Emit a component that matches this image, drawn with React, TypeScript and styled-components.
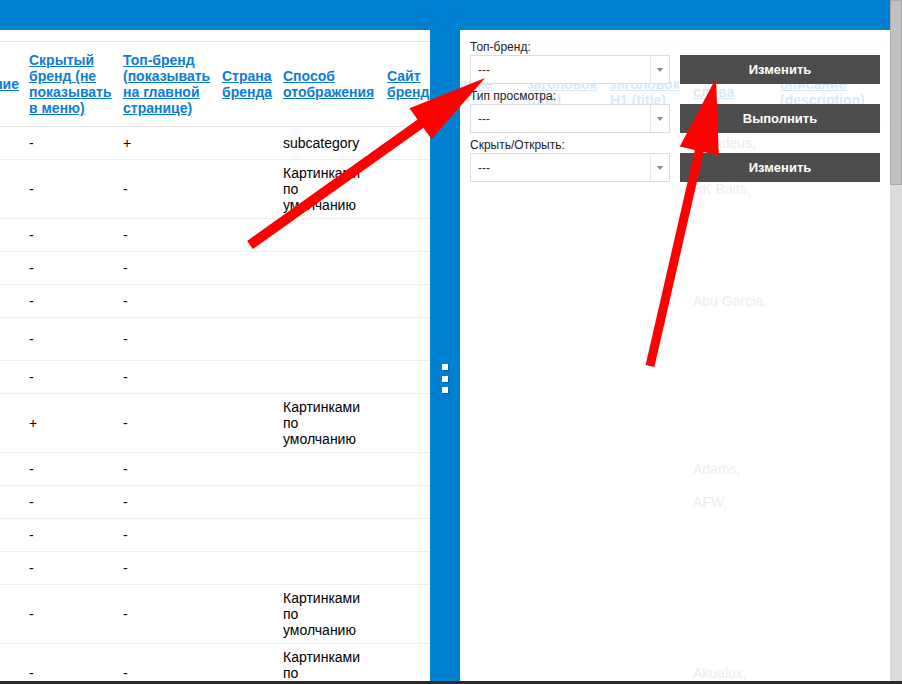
import React from 'react';
import styled, { createGlobalStyle } from 'styled-components';

const GlobalStyle = createGlobalStyle`
  html, body { margin: 0; padding: 0; background: #ffffff; }
  body { font-family: "Liberation Sans", Arial, sans-serif; }
  * { box-sizing: border-box; }
`;

const LEFT_COLS = '24px 94px 99px 61px 104px 120px';
const GHOST_COLS = '62px 83px 83px 87px 115px';

const Screen = styled.div`
  position: relative;
  width: 902px;
  height: 684px;
  overflow: hidden;
  display: flex;
  flex-direction: column;
`;

const Workspace = styled.div`
  display: flex;
  height: 681px;
`;

const Main = styled.div`
  width: 890px;
  background: #0080d0;
  padding-top: 30px;
  display: grid;
  grid-template-columns: 430px 30px 430px;
  grid-template-rows: minmax(0, 1fr);
`;

const LeftPanel = styled.div`
  background: #ffffff;
  overflow: hidden;
  padding-top: 11px;
`;

const Splitter = styled.div`
  display: flex;
  flex-direction: column;
  align-items: center;
  gap: 5.5px;
  padding-top: 334px;
`;

const Grip = styled.span`
  display: block;
  width: 6px;
  height: 6px;
  background: #ffffff;
  box-shadow: 1px 1px 0 rgba(0, 40, 90, 0.35);
`;

const RightPanel = styled.div`
  background: #ffffff;
  overflow: hidden;
  display: grid;
  grid-template-columns: 100%;
  grid-template-rows: 100%;
`;

const HeadRow = styled.div<{ $cols: string }>`
  display: grid;
  grid-template-columns: ${(p) => p.$cols};
  height: 86px;
  border-top: 1px solid #e4e4e4;
  border-bottom: 1px solid #e4e4e4;
`;

const HeadCell = styled.div<{ $end?: boolean; $flush?: boolean }>`
  display: flex;
  align-items: center;
  justify-content: ${(p) => (p.$end ? 'flex-end' : 'flex-start')};
  padding: ${(p) => (p.$flush ? '0' : '0 5px')};
  overflow: hidden;
  white-space: nowrap;
`;

const HeadLink = styled.a`
  color: #0c7ed4;
  font-weight: bold;
  font-size: 14px;
  line-height: 16px;
  text-decoration: underline;
  cursor: pointer;
`;

const BodyRow = styled.div<{ $cols: string; $min: number }>`
  display: grid;
  grid-template-columns: ${(p) => p.$cols};
  min-height: ${(p) => p.$min}px;
  border-bottom: 1px solid #eeeeee;
`;

const Cell = styled.div`
  display: flex;
  align-items: center;
  padding: 5px;
  font-size: 14px;
  line-height: 16px;
  color: #000000;
  white-space: nowrap;
`;

const Ghost = styled.div`
  grid-area: 1 / 1;
  padding-top: 11px;
`;

const GhostHead = styled.div`
  opacity: 0.16;
`;

const GhostBody = styled.div`
  opacity: 0.07;
`;

const Form = styled.div`
  grid-area: 1 / 1;
  align-self: start;
  position: relative;
  z-index: 1;
  padding: 10px;
  display: flex;
  flex-direction: column;
  gap: 5px;
`;

const Field = styled.div`
  display: grid;
  grid-template-columns: 200px 200px;
  grid-template-rows: 14px 29px;
  column-gap: 10px;
  row-gap: 1px;
`;

const Label = styled.label`
  grid-column: 1;
  grid-row: 1;
  font-size: 12px;
  line-height: 14px;
  color: #222222;
`;

const SelectBox = styled.div`
  grid-column: 1;
  grid-row: 2;
  display: flex;
  height: 29px;
  background: #ffffff;
  border: 1px solid #dcdcdc;
`;

const SelectValue = styled.span`
  flex: 1;
  display: flex;
  align-items: center;
  padding-left: 7px;
  font-size: 12px;
  color: #333333;
`;

const SelectArrow = styled.span`
  width: 19px;
  display: flex;
  align-items: center;
  justify-content: center;
  border-left: 1px solid #e4e4e4;
  &::after {
    content: '';
    border-left: 3px solid transparent;
    border-right: 3px solid transparent;
    border-top: 4px solid #8a8a8a;
  }
`;

const ActionButton = styled.button`
  grid-column: 2;
  grid-row: 2;
  height: 29px;
  border: none;
  background: #4d4d4d;
  color: #ffffff;
  font-family: inherit;
  font-weight: bold;
  font-size: 13px;
  padding: 0;
  cursor: pointer;
`;

const Scrollbar = styled.div`
  width: 12px;
  background: #dcdcdc;
`;

const Thumb = styled.div`
  height: 185px;
  background: #c1c1c1;
  border: 1px solid #a9a9a9;
`;

const BottomBar = styled.div`
  height: 3px;
  background: #2b2b2b;
`;

const Annotations = styled.svg`
  position: absolute;
  left: 0;
  top: 0;
  z-index: 2;
  pointer-events: none;
`;

type BrandRow = {
  hidden: string;
  top: string;
  mode?: string[];
  min: number;
  ghost?: string;
};

const DEFAULT_MODE = ['Картинками', 'по', 'умолчанию'];

const rows: BrandRow[] = [
  { hidden: '-', top: '+', mode: ['subcategory'], min: 33, ghost: 'Amadeus,' },
  { hidden: '-', top: '-', mode: DEFAULT_MODE, min: 59, ghost: 'BK Baits,' },
  { hidden: '-', top: '-', min: 33 },
  { hidden: '-', top: '-', min: 33 },
  { hidden: '-', top: '-', min: 33, ghost: 'Abu Garcia,' },
  { hidden: '-', top: '-', min: 43 },
  { hidden: '-', top: '-', min: 33 },
  { hidden: '+', top: '-', mode: DEFAULT_MODE, min: 59 },
  { hidden: '-', top: '-', min: 33, ghost: 'Adams,' },
  { hidden: '-', top: '-', min: 33, ghost: 'AFW,' },
  { hidden: '-', top: '-', min: 33 },
  { hidden: '-', top: '-', min: 33 },
  { hidden: '-', top: '-', mode: DEFAULT_MODE, min: 59 },
  { hidden: '-', top: '-', mode: DEFAULT_MODE, min: 59, ghost: 'Akualux,' },
];

const Lines: React.FC<{ lines: string[] }> = ({ lines }) => (
  <>
    {lines.map((l, i) => (
      <React.Fragment key={i}>
        {i > 0 && <br />}
        {l}
      </React.Fragment>
    ))}
  </>
);

const leftHeaders: { lines: string[]; end?: boolean }[] = [
  { lines: ['Название'], end: true },
  { lines: ['Скрытый', 'бренд (не', 'показывать', 'в меню)'] },
  { lines: ['Топ-бренд', '(показывать', 'на главной', 'странице)'] },
  { lines: ['Страна', 'бренда'] },
  { lines: ['Способ', 'отображения'] },
  { lines: ['Сайт', 'бренда'] },
];

const ghostHeaders: string[][] = [
  ['ание'],
  ['Мета', 'заголовок', '(title)'],
  ['Мета', 'заголовок', 'H1 (title)'],
  ['Ключевые', 'слова'],
  ['Мета', 'описание', '(description)'],
];

const fields = [
  { label: 'Топ-бренд:', action: 'Изменить' },
  { label: 'Тип просмотра:', action: 'Выполнить' },
  { label: 'Скрыть/Открыть:', action: 'Изменить' },
];

export default function App() {
  return (
    <>
      <GlobalStyle />
      <Screen>
        <Workspace>
          <Main>
            <LeftPanel>
              <HeadRow $cols={LEFT_COLS}>
                {leftHeaders.map((h, i) => (
                  <HeadCell key={i} $end={h.end}>
                    <HeadLink>
                      <Lines lines={h.lines} />
                    </HeadLink>
                  </HeadCell>
                ))}
              </HeadRow>
              {rows.map((r, i) => (
                <BodyRow key={i} $cols={LEFT_COLS} $min={r.min}>
                  <Cell />
                  <Cell>{r.hidden}</Cell>
                  <Cell>{r.top}</Cell>
                  <Cell />
                  <Cell>{r.mode ? <Lines lines={r.mode} /> : null}</Cell>
                  <Cell />
                </BodyRow>
              ))}
            </LeftPanel>

            <Splitter>
              <Grip />
              <Grip />
              <Grip />
            </Splitter>

            <RightPanel>
              <Ghost>
                <GhostHead>
                  <HeadRow $cols={GHOST_COLS}>
                    {ghostHeaders.map((h, i) => (
                      <HeadCell key={i} $flush={i === 0}>
                        <HeadLink>
                          <Lines lines={h} />
                        </HeadLink>
                      </HeadCell>
                    ))}
                  </HeadRow>
                </GhostHead>
                <GhostBody>
                  {rows.map((r, i) => (
                    <BodyRow key={i} $cols={GHOST_COLS} $min={r.min}>
                      <Cell />
                      <Cell />
                      <Cell />
                      <Cell>{r.ghost ?? ''}</Cell>
                      <Cell />
                    </BodyRow>
                  ))}
                </GhostBody>
              </Ghost>

              <Form>
                {fields.map((f, i) => (
                  <Field key={i}>
                    <Label>{f.label}</Label>
                    <SelectBox>
                      <SelectValue>---</SelectValue>
                      <SelectArrow />
                    </SelectBox>
                    <ActionButton type="button">{f.action}</ActionButton>
                  </Field>
                ))}
              </Form>
            </RightPanel>
          </Main>
          <Scrollbar>
            <Thumb />
          </Scrollbar>
        </Workspace>
        <BottomBar />

        <Annotations width="902" height="684" viewBox="0 0 902 684">
          <polygon
            fill="#ff0000"
            points="247.1,240.9 417.6,119.6 409.5,108.2 485,78 431.5,139.2 423.4,127.8 252.9,249.1"
          />
          <polygon
            fill="#ff0000"
            points="645.6,365 694.9,150.1 679.8,146.6 716,78 718.8,155.6 703.7,152.1 654.4,367"
          />
        </Annotations>
      </Screen>
    </>
  );
}
